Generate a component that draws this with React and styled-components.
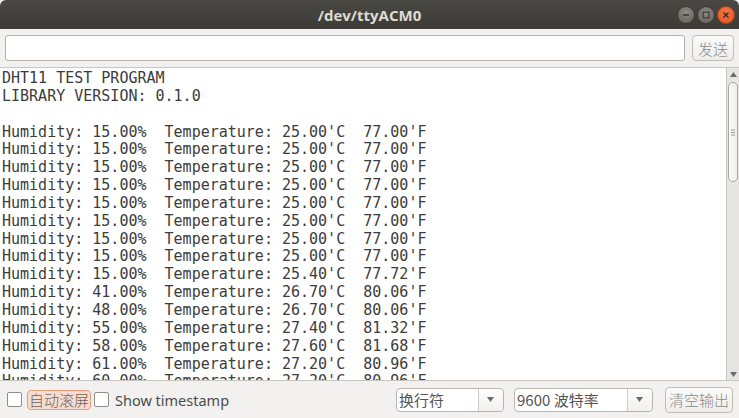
import React from 'react';
import styled, { createGlobalStyle } from 'styled-components';

const GlobalStyle = createGlobalStyle`
  html, body { margin: 0; padding: 0; background: #f2f1f0; }
  body { width: 739px; height: 418px; overflow: hidden; }
`;

const Window = styled.div`
  width: 739px;
  height: 418px;
  display: flex;
  flex-direction: column;
  background: #f2f1f0;
  font-family: "Noto Sans", "Noto Sans CJK SC", sans-serif;
`;

const TitleBar = styled.div`
  height: 29px;
  flex: 0 0 29px;
  position: relative;
  display: flex;
  align-items: center;
  justify-content: center;
  background: linear-gradient(#4a4843, #3c3b37);
  color: #dfdbd2;
  font-family: "Open Sans", "DejaVu Sans", sans-serif;
  font-weight: 700;
  font-size: 15px;
  border-radius: 6px 6px 0 0;
`;

const Controls = styled.div`
  position: absolute;
  right: 4px;
  top: 6px;
  display: flex;
  gap: 2px;
`;

const Ctrl = styled.div`
  width: 18px;
  height: 18px;
  border-radius: 50%;
  background: ${p => (p.close ? 'radial-gradient(circle at 50% 35%, #f27a4a, #e0501c)' : 'radial-gradient(circle at 50% 35%, #8d8b85, #5f5e5a)')};
  border: 1px solid ${p => (p.close ? '#b1411a' : '#3b3a36')};
  box-sizing: border-box;
  display: flex;
  align-items: center;
  justify-content: center;
`;

const InputRow = styled.div`
  display: flex;
  align-items: center;
  padding: 6px 5px 0 5px;
  gap: 7px;
`;

const TextInput = styled.div`
  flex: 1;
  height: 26px;
  box-sizing: border-box;
  background: #fff;
  border: 1px solid #b3b0aa;
  border-radius: 3px;
`;

const Button = styled.div`
  height: 26px;
  box-sizing: border-box;
  padding: 0 ${p => p.px || 3}px;
  display: flex;
  align-items: center;
  border: 1px solid #c0bdb7;
  border-radius: 4px;
  background: linear-gradient(#fbfbfa, #eeedec);
  color: #8b8985;
  font-family: "Noto Sans CJK SC", sans-serif;
  font-weight: 300;
  font-size: 15px;
`;

const Console = styled.div`
  margin-top: 6px;
  height: 312px;
  display: flex;
  border-top: 1px solid #c9c6c0;
  border-bottom: 1px solid #c9c6c0;
`;

const Output = styled.pre`
  flex: 1;
  margin: 0;
  padding: 2px 0 0 2px;
  background: #fff;
  overflow: hidden;
  font-family: "DejaVu Sans Mono", monospace;
  font-size: 15px;
  line-height: 17.85px;
  color: #3c3c3c;
  border-right: 1px solid #c9c6c0;
`;

const Scrollbar = styled.div`
  width: 12px;
  background: #e6e5e3;
  display: flex;
  flex-direction: column;
  align-items: center;
`;

const ArrowBtn = styled.div`
  height: 12px;
  width: 12px;
  display: flex;
  align-items: center;
  justify-content: center;
`;

const Thumb = styled.div`
  width: 10px;
  height: 100px;
  box-sizing: border-box;
  margin-top: 2px;
  border: 1px solid #a9a7a2;
  border-radius: 6px;
  background: linear-gradient(90deg, #fafafa, #ededec);
  display: flex;
  align-items: center;
  justify-content: center;
`;

const Track = styled.div`
  flex: 1;
`;

const BottomBar = styled.div`
  flex: 1;
  display: flex;
  align-items: center;
  padding: 0 6px 0 7px;
`;

const Check = styled.div`
  width: 13px;
  height: 13px;
  border: 1px solid #8f8d89;
  border-radius: 2px;
  background: #fff;
  margin-right: ${p => p.mr || 5}px;
`;

const Label = styled.span`
  font-family: ${p => (p.cjk ? '"Noto Sans CJK SC", sans-serif' : '"Noto Sans", sans-serif')};
  font-size: ${p => (p.cjk ? 15 : 14.5)}px;
  color: #4c4c4c;
  ${p => p.focused && `
    background: #f8dccf;
    border: 1px solid #eb9a7a;
    border-radius: 4px;
    padding: 0 1px;
    color: #6b6661;
    margin-right: 3px;
    line-height: 18px;
    font-weight: 300;
  `}
`;

const Spacer = styled.div`
  flex: 1;
`;

const Combo = styled.div`
  width: ${p => p.w}px;
  height: 24px;
  box-sizing: border-box;
  display: flex;
  border: 1px solid #b8b5af;
  border-radius: 4px;
  background: #fff;
  margin-right: ${p => p.mr || 0}px;
`;

const ComboText = styled.div`
  flex: 1;
  display: flex;
  align-items: center;
  padding-left: 2px;
  font-family: "Noto Sans CJK SC", sans-serif;
  font-size: 15px;
  color: #555;
  border-right: 1px solid #cfccc7;
`;

const ComboArrow = styled.div`
  width: 24px;
  display: flex;
  align-items: center;
  justify-content: center;
  background: linear-gradient(#fdfdfd, #f1f0ef);
  border-radius: 0 4px 4px 0;
`;

const lines = [
  'DHT11 TEST PROGRAM',
  'LIBRARY VERSION: 0.1.0',
  '',
];
const data = [
  ['15.00', '25.00', '77.00'],
  ['15.00', '25.00', '77.00'],
  ['15.00', '25.00', '77.00'],
  ['15.00', '25.00', '77.00'],
  ['15.00', '25.00', '77.00'],
  ['15.00', '25.00', '77.00'],
  ['15.00', '25.00', '77.00'],
  ['15.00', '25.00', '77.00'],
  ['15.00', '25.40', '77.72'],
  ['41.00', '26.70', '80.06'],
  ['48.00', '26.70', '80.06'],
  ['55.00', '27.40', '81.32'],
  ['58.00', '27.60', '81.68'],
  ['61.00', '27.20', '80.96'],
  ['60.00', '27.20', '80.96'],
];
data.forEach(([h, c, f]) => lines.push(`Humidity: ${h}%  Temperature: ${c}'C  ${f}'F`));

const Tri = ({ up }) => (
  <svg width="7" height="5" viewBox="0 0 7 5">
    <path d={up ? 'M0 5 L3.5 0 L7 5 Z' : 'M0 0 L3.5 5 L7 0 Z'} fill="#6d6b67" />
  </svg>
);

export default function App() {
  return (
    <Window>
      <GlobalStyle />
      <TitleBar>
        /dev/ttyACM0
        <Controls>
          <Ctrl>
            <svg width="8" height="8" viewBox="0 0 8 8"><path d="M1 4 H7" stroke="#3c3b37" strokeWidth="1.6" /></svg>
          </Ctrl>
          <Ctrl>
            <svg width="8" height="8" viewBox="0 0 8 8"><rect x="1.2" y="1.2" width="5.6" height="5.6" fill="none" stroke="#3c3b37" strokeWidth="1.2" /></svg>
          </Ctrl>
          <Ctrl close>
            <svg width="8" height="8" viewBox="0 0 8 8"><path d="M1.5 1.5 L6.5 6.5 M6.5 1.5 L1.5 6.5" stroke="#3c2418" strokeWidth="1.4" /></svg>
          </Ctrl>
        </Controls>
      </TitleBar>
      <InputRow>
        <TextInput />
        <Button px={5}>发送</Button>
      </InputRow>
      <Console>
        <Output>{lines.join('\n')}</Output>
        <Scrollbar>
          <ArrowBtn><Tri up /></ArrowBtn>
          <Thumb>
            <svg width="4" height="7" viewBox="0 0 4 7"><path d="M0 1 H4 M0 3.5 H4 M0 6 H4" stroke="#9a9894" strokeWidth="1" /></svg>
          </Thumb>
          <Track />
          <ArrowBtn><Tri /></ArrowBtn>
        </Scrollbar>
      </Console>
      <BottomBar>
        <Check />
        <Label cjk focused>自动滚屏</Label>
        <Check mr={6} />
        <Label>Show timestamp</Label>
        <Spacer />
        <Combo w={108} mr={10}>
          <ComboText>换行符</ComboText>
          <ComboArrow><Tri /></ComboArrow>
        </Combo>
        <Combo w={139} mr={12}>
          <ComboText>9600 波特率</ComboText>
          <ComboArrow><Tri /></ComboArrow>
        </Combo>
        <Button>清空输出</Button>
      </BottomBar>
    </Window>
  );
}
